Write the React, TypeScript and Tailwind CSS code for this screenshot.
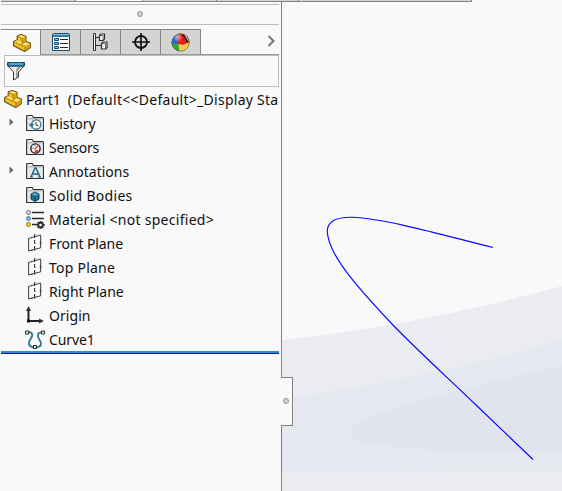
import React from "react";

type P = { className?: string };

const PartIcon = ({ className = "" }: P) => (
  <svg className={`h-[18px] w-[18px] shrink-0 ${className}`} viewBox="0 0 18 18" strokeLinejoin="round">
    <path d="M4.2 2 8 .6l5 1.6v5.3l4.3 1.6v4.4l-5.6 4L.6 11.8V7.4l3.6-1.6Z" fill="#f2c01c" stroke="#6b4d0c" strokeWidth="1.1" />
    <path d="M5 2.3 8 1.2l4.2 1.3L9 4ZM1.3 7.5l3-1.2 5 2.3-1.6 1.6Zm7.4 2.8 3.6-2 4.2 1.2-4.6 2.6Z" fill="#ffe673" />
    <path d="M9 4.3 12.5 3v4.7L9 9Zm2.9 8.1 4.9-2.8v3.7l-4.9 3.6Z" fill="#d7a216" />
    <path d="M4.5 2.6 9 4.3V9M4.5 3v3.3M1 7.7l7 3.2 3.9 1.5v4.5M8.3 10.4l4-2.4" fill="none" stroke="#8b660f" strokeWidth=".7" />
  </svg>
);

const ListIcon = () => (
  <svg className="h-[18px] w-[18px]" viewBox="0 0 18 18">
    <path d="M.5 1.5Q.5.5 1.5.5h15q1 0 1 1v16H.5Z" fill="#fff" stroke="#174d6b" />
    <path d="M1 1h16v3H1Z" fill="#2c7ca5" />
    <path d="M1 1.5h16" stroke="#8bc4dd" />
    <path d="M2.5 5.5h4v2h-4Zm0 4h4v2h-4Zm0 4h4v2h-4Z" fill="#8dc4de" stroke="#124b6b" />
    <path d="M8 6.5h8M8 10.5h8M8 14.5h8" stroke="#222" />
  </svg>
);

const TreeIcon = () => (
  <svg className="h-[19px] w-[15px]" viewBox="0 0 15 19" fill="#fafafa" stroke="#303030">
    <path d="M.5.5h2v17h-2ZM3 4.5h4M3 12.5h5" />
    <path d="M6.5 2.5 8 1h3.5v5L10 7.5H6.5Zm2 8L10 9h4v5.5L12.5 16h-4Z" strokeWidth="1.2" />
    <path d="M6.5 2.5H10v5M8.5 10.5h4V16" fill="none" strokeWidth=".7" />
  </svg>
);

const TargetIcon = () => (
  <svg className="h-[18px] w-[18px]" viewBox="0 0 18 18" fill="none" stroke="#111">
    <circle cx="9" cy="9" r="6" strokeWidth="1.8" />
    <path d="M9 0v18M0 9h18" strokeWidth="1.7" />
  </svg>
);

const BallIcon = () => (
  <svg className="h-[19px] w-[19px]" viewBox="0 0 19 19">
    <defs>
      <clipPath id="ball"><circle cx="9.5" cy="9.5" r="9" /></clipPath>
      <radialGradient id="shine" cx=".35" cy=".2"><stop stopColor="#fff" stopOpacity=".6" /><stop offset=".55" stopColor="#fff" stopOpacity="0" /></radialGradient>
    </defs>
    <g clipPath="url(#ball)">
      <path d="M0 0h10v11H0Z" fill="#2d64d4" />
      <path d="M8 0h11v12H7Q5 5 8 0Z" fill="#e51f1b" />
      <path d="M0 10q5 2 9 1v8H0Z" fill="#27a631" />
      <path d="M8 11q5 2 8-1l3-4v14H9Q7 15 8 11Z" fill="#efcb55" />
      <path d="M10 2q4 2 6 8 3-1 3-4V3L13 0Z" fill="#20100e" />
      <path d="m14 2 4 6" stroke="#d8bcb4" strokeWidth="1.4" />
      <circle cx="9.5" cy="9.5" r="9" fill="url(#shine)" />
    </g>
    <circle cx="9.5" cy="9.5" r="8.7" fill="none" stroke="#74604b" strokeWidth=".7" />
  </svg>
);

const FilterIcon = () => (
  <svg className="h-[19px] w-[18px]" viewBox="0 0 18 19">
    <path d="m1 4 5.5 6v8l5-3v-5L17 4Z" fill="#eee" stroke="#333" />
    <path d="m10 9 4-4h-3L9 8v8l2-1.5Z" fill="#929292" />
    <path d="M.5.5h17V4H.5Z" fill="#1e789f" stroke="#105171" />
    <path d="M2 2h14" stroke="#64b5d4" strokeWidth="1.5" />
  </svg>
);

const Folder = ({ children }: { children: React.ReactNode }) => (
  <svg className="h-[18px] w-[18px]" viewBox="0 0 18 18">
    <path d="M.6 16.5V2.5q0-1 1-1H6L7.5 3.5h9q1 0 1 1v12Z" fill="#e6e8e9" stroke="#333" strokeWidth="1.15" />
    <path d="M1.5 4.8h15" stroke="#aaa" />
    {children}
  </svg>
);

const HistoryIcon = () => (
  <Folder>
    <circle cx="10.2" cy="10.5" r="4.6" fill="#fff" stroke="#34718f" strokeWidth="1.2" />
    <path d="M2.5 9.7h6l-3 4Z" fill="#23779f" />
    <path d="M10 8v3l2.7 1" fill="none" stroke="#333" />
  </Folder>
);
const SensorIcon = () => (
  <Folder>
    <circle cx="9.5" cy="10.5" r="4.6" fill="#fff" stroke="#222" strokeWidth="1.4" />
    <path d="M6.5 10h1M9 7.3v1" stroke="#222" />
    <path d="m8.5 11.5 3.5-3.5" stroke="#dd3c24" strokeWidth="1.3" />
    <path d="M9.5 12h3.5l-2 2.5H8Z" fill="#dd3c24" />
  </Folder>
);
const AnnotationIcon = () => (
  <Folder>
    <path d="m5 15 4-9h1l4 9M7 12h5" fill="none" stroke="#1c6288" strokeWidth="1.5" />
    <path d="M4 15h3m5 0h3" stroke="#1c6288" />
  </Folder>
);
const BodiesIcon = () => (
  <Folder>
    <path d="m5 8 4-2 4 2v5l-4 2.5L5 13Z" fill="#1b7295" stroke="#103f56" />
    <path d="m5.5 8.2 3.5-1.6 3.5 1.6L9 10Z" fill="#5ba5c0" />
    <path d="M9 10v5" stroke="#103f56" strokeWidth=".8" />
  </Folder>
);
const MaterialIcon = () => (
  <svg className="h-[19px] w-[19px]" viewBox="0 0 19 19">
    <path d="M6 2.5h12M6 8.5h12M6 14.5h5" stroke="#2a2a2a" strokeWidth="1.6" />
    <circle cx="2.5" cy="2.5" r="1.9" fill="#fff" stroke="#555" />
    <circle cx="2.5" cy="8.5" r="1.9" fill="#7bc4ea" stroke="#27719b" />
    <circle cx="2.5" cy="14.5" r="2" fill="#ffc51d" stroke="#a57b10" />
    <circle cx="14.5" cy="15" r="2.3" fill="none" stroke="#333" strokeWidth="2" />
    <path d="M14.5 11v1.5m0 5V19m-4-4H12m5 0h2m-7.3-3 1 1m3.5 4 1 1m-5.5 0 1-1m3.5-4 1-1" stroke="#333" strokeWidth="1.6" />
  </svg>
);
const PlaneIcon = () => (
  <svg className="h-[18px] w-[14px]" viewBox="0 0 14 18" fill="none" stroke="#3c3c3c">
    <path d="M.6 4.4 12.7 1v12.8L.6 17Z" />
    <path d="M6.6 0v4m0 2v4m0 2v4.5M3 16.5l1.5-.4M12.5 7v4" strokeWidth="1.2" />
  </svg>
);
const OriginIcon = () => (
  <svg className="h-[18px] w-[18px]" viewBox="0 0 18 18">
    <path d="M2.5 3v12H15" fill="none" stroke="#202020" strokeWidth="1.9" />
    <path d="M0 5 2.5 0 5 5ZM13 12.5l5 2.5-5 2.5Z" fill="#303030" />
    <path d="M1 13.5h3v3H1Z" fill="#111" />
  </svg>
);
const CurveIcon = () => (
  <svg className="h-[19px] w-[20px]" viewBox="0 0 20 19">
    <path d="M3 2.5c3-1 5 1 4 4-1 2-4 5-3 8 1 2 3 3 6 3 5 0 6-2 6-4 0-3-4-5-3-9 .5-2 2-2.5 5-2" fill="none" stroke="#2e7899" strokeWidth="1.8" />
    <path d="M.6 1h3v3h-3Zm15.8 0h3v3h-3ZM8.5 15.5h3v3h-3Z" fill="#fff" stroke="#222" />
  </svg>
);

const rows = [
  { label: "History", icon: <HistoryIcon />, arrow: true, text: "tracking-[-0.1px]" },
  { label: "Sensors", icon: <SensorIcon />, text: "tracking-[-0.3px]" },
  { label: "Annotations", icon: <AnnotationIcon />, arrow: true, text: "tracking-[0px]" },
  { label: "Solid Bodies", icon: <BodiesIcon />, text: "tracking-[0.3px]" },
  { label: "Material <not specified>", icon: <MaterialIcon />, text: "tracking-[0.28px]" },
  { label: "Front Plane", icon: <PlaneIcon />, text: "tracking-[-0.1px]" },
  { label: "Top Plane", icon: <PlaneIcon />, text: "tracking-[0.23px]" },
  { label: "Right Plane", icon: <PlaneIcon />, text: "tracking-[0px]" },
  { label: "Origin", icon: <OriginIcon />, text: "tracking-[0.05px]" },
  { label: "Curve1", icon: <CurveIcon />, text: "tracking-[-0.1px]" },
];

const tabs = [<ListIcon />, <TreeIcon />, <TargetIcon />, <BallIcon />];

const Dot = () => <span className="block h-[6px] w-[6px] rounded-full border border-[#949494] bg-[#d0d0d0]" />;

export default function App() {
  return (
    <div className="relative flex h-[491px] w-[562px] flex-col overflow-hidden bg-[#f9f9f9] font-['Noto_Sans','Open_Sans',sans-serif] text-[14px] text-[#101010]">
      <div className="ml-px flex h-[2px] w-[471px] shrink-0 border-r border-b border-[#858585] bg-[#d4d4d2]">
        <i className="w-[75px] border-r border-[#858585]" />
        <i className="w-[67px] border-r border-[#858585] bg-white" />
        <i className="w-[74px] border-r border-[#858585]" />
        <i className="w-[82px] border-r border-[#858585]" />
      </div>
      <div className="flex min-h-0 flex-1">
        <aside className="flex w-[282px] shrink-0 flex-col border-r border-[#808080] pl-px">
          <div className="mt-[2px] flex h-[21px] w-[278px] shrink-0 items-center justify-center border-y border-[#bcbcbc] pb-px"><Dot /></div>
          <div className="mt-[4px] flex h-[26px] w-[278px] shrink-0">
            <div className="flex w-[39px] items-center justify-center border-t border-[#858585] pl-[2px]"><PartIcon /></div>
            <div className="flex flex-1 border-b border-[#989898]">
              <div className="flex border-t border-l border-[#858585] bg-[#d4d4d2]">
                {tabs.map((icon, i) => <div key={i} className="flex w-[40px] items-center justify-center border-r border-[#858585]">{icon}</div>)}
              </div>
              <svg className="mt-[6px] ml-[66px] h-[12px] w-[8px]" viewBox="0 0 8 12" fill="none" stroke="#777" strokeWidth="2"><path d="m1.5 1 5 5-5 5" /></svg>
            </div>
          </div>
          <div className="ml-[3px] flex h-[32px] w-[275px] shrink-0 items-center border border-[#bcbcbc] pl-[2px]"><FilterIcon /></div>
          <div className="flex h-6 w-[278px] shrink-0 items-center whitespace-pre pl-[3px]">
            <PartIcon />
            <span className="ml-[4px] tracking-[-0.1px]">{"Part1  "}</span>
            <span className="tracking-[0.27px]">{"(Default<<Default>_Display Sta"}</span>
          </div>
          {rows.map((row) => (
            <div key={row.label} className="flex h-6 w-[278px] shrink-0 items-center whitespace-pre">
              <span className="flex w-[23px] pl-[8px]">
                {row.arrow && <svg className="mb-[2px] h-[8px] w-[5px]" viewBox="0 0 5 8"><path d="M.5.5v7L4.5 4Z" fill="#666" /></svg>}
              </span>
              <span className="flex w-[22px] justify-center">{row.icon}</span>
              <span className={`ml-[3px] ${row.text}`}>{row.label}</span>
            </div>
          ))}
          <div className="h-[3px] w-[278px] shrink-0 border-b border-[#17178b] bg-[#2e8ecb]" />
        </aside>
        <main className="min-w-0 flex-1">
          <svg className="block h-[489px] w-[280px]" viewBox="282 2 280 489">
            <path d="M282 340Q420 325 562 286V491H282Z" fill="#ebecf1" />
            <path d="M282 399Q430 379 562 340V471L282 472Z" fill="#e5e8ef" />
            <path d="M562 366Q500 379 440 395 350 420 350 432 351 443 390 446 420 451 480 451H562Z" fill="#e1e4ed" />
            <path d="M493 247.5C455 238.5 390 219 352 217.3 334 217 327.5 222 327.3 231 327.5 254 358 288 392 324 420 353 446 376 476 405L533 459.5" fill="none" stroke="#0808ff" strokeWidth="1.15" />
          </svg>
        </main>
      </div>
      <div className="absolute top-[377px] left-[281px] flex h-[49px] w-[12px] items-center justify-center border-y border-r border-[#808080] bg-[#f9f9f9] pr-px pb-px"><Dot /></div>
    </div>
  );
}
